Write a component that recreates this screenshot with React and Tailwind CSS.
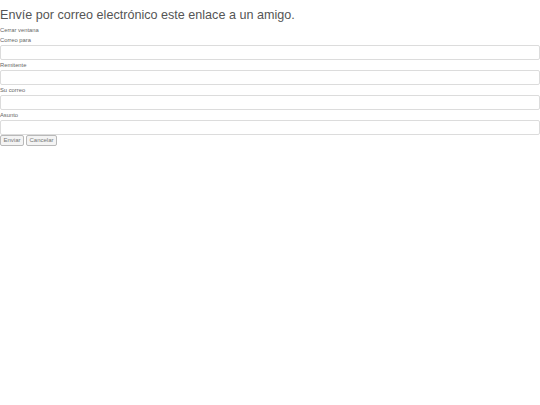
import React from "react";

const fields = ["Correo para", "Remitente", "Su correo", "Asunto"];

export default function App() {
  return (
    <div className="bg-white min-h-screen text-[#555]" style={{ fontFamily: '"Liberation Sans", Arial, sans-serif' }}>
      <h1 className="text-[12.6px] leading-[22px] h-[26px] pt-[4px] text-[#555] font-normal">
        Envíe por correo electrónico este enlace a un amigo.
      </h1>
      <div className="text-[5.8px] leading-[9px] h-[9px] text-[#666]">Cerrar ventana</div>
      <form className="flex flex-col">
        {fields.map((label) => (
          <div key={label} className="flex flex-col">
            <label className="text-[5.8px] leading-[10px] h-[10px] text-[#666]">{label}</label>
            <input
              type="text"
              className="h-[15px] w-full border border-[#dcdcdc] rounded-[2px] bg-white"
            />
          </div>
        ))}
        <div className="flex gap-[2px]">
          <button
            type="button"
            className="h-[11px] px-[2.5px] text-[6px] leading-[9px] text-[#777] bg-[#f4f4f4] border border-[#b9b9b9] rounded-[2px]"
          >
            Enviar
          </button>
          <button
            type="button"
            className="h-[11px] px-[2.5px] text-[6px] leading-[9px] text-[#777] bg-[#f4f4f4] border border-[#b9b9b9] rounded-[2px]"
          >
            Cancelar
          </button>
        </div>
      </form>
    </div>
  );
}
